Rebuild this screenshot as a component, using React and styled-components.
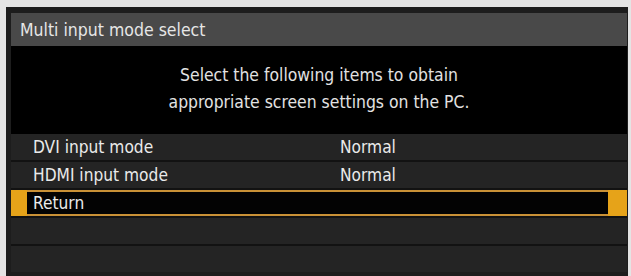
import React from "react";
import styled, { createGlobalStyle } from "styled-components";

const GlobalStyle = createGlobalStyle`
  html, body {
    margin: 0;
    padding: 0;
    background: #e4e4e4;
    overflow: hidden;
  }
  body {
    font-family: "DejaVu Sans Condensed", "DejaVu Sans", sans-serif;
    color: #ececec;
  }
`;

const Frame = styled.div`
  margin: 7px 3px 0 6px;
  height: 269px;
  padding: 6px 1px 0 5px;
  background: #1d1d1d;
  box-sizing: border-box;
  display: flex;
  flex-direction: column;
`;

const TitleBar = styled.div`
  height: 33px;
  display: flex;
  align-items: center;
  padding-left: 9px;
  background: #494949;
  font-size: 17.5px;
  color: #e6e6e6;
`;

const Message = styled.div`
  height: 88px;
  background: #000;
  display: flex;
  flex-direction: column;
  justify-content: center;
  align-items: center;
  font-size: 17.4px;
  line-height: 27px;
  color: #e2e2e2;
  padding-bottom: 2px;
  box-sizing: border-box;
`;

const List = styled.div`
  display: grid;
  grid-auto-rows: 26px;
  row-gap: 2px;
  background: #121212;
`;

const Row = styled.div`
  position: relative;
  display: grid;
  grid-template-columns: 307px 1fr;
  align-items: center;
  padding-left: 22px;
  font-size: 17.2px;
  color: #eaeaea;
  background: ${({ $selected }) => ($selected ? "#030303" : "#242424")};
  box-shadow: ${({ $selected }) =>
    $selected ? "inset 0 2px 0 #c99136, inset 0 -2px 0 #c99136" : "none"};
`;

const Tab = styled.span`
  position: absolute;
  top: 0;
  bottom: 0;
  width: ${({ $side }) => ($side === "left" ? "16px" : "19px")};
  ${({ $side }) => ($side === "left" ? "left: 0;" : "right: 0;")}
  background: #e6a319;
`;

const rows = [
  { label: "DVI input mode", value: "Normal" },
  { label: "HDMI input mode", value: "Normal" },
  { label: "Return", value: "", selected: true },
  { label: "", value: "" },
  { label: "", value: "" },
];

export default function App() {
  return (
    <>
      <GlobalStyle />
      <Frame>
        <TitleBar>Multi input mode select</TitleBar>
        <Message>
          <div>Select the following items to obtain</div>
          <div>appropriate screen settings on the PC.</div>
        </Message>
        <List>
          {rows.map((r, i) => (
            <Row key={i} $selected={r.selected}>
              {r.selected && <Tab $side="left" />}
              <span>{r.label}</span>
              <span>{r.value}</span>
              {r.selected && <Tab $side="right" />}
            </Row>
          ))}
        </List>
      </Frame>
    </>
  );
}
